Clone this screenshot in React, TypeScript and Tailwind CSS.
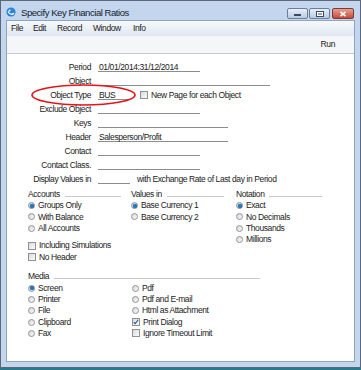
import React from "react";

const font = "font-['Liberation_Sans',Arial,sans-serif]";

interface FieldRow {
  label: string;
  value?: string;
  width: number;
}

const Radio: React.FC<{ checked?: boolean; label: string }> = ({ checked, label }) => (
  <div className="flex h-[11.3px] items-center gap-[3px]">
    <span className="flex h-[7px] w-[7px] shrink-0 items-center justify-center rounded-full border border-[#8e9297] bg-gradient-to-br from-[#d8d8d8] to-[#fafafa]">
      {checked && <span className="h-[4px] w-[4px] rounded-full bg-[#1f7bc4] shadow-[0_0_1px_#0d4a86]" />}
    </span>
    <span className="leading-none">{label}</span>
  </div>
);

const Check: React.FC<{ checked?: boolean; label: string }> = ({ checked, label }) => (
  <div className="flex h-[11.3px] items-center gap-[3px]">
    <span className="relative flex h-[8px] w-[8px] shrink-0 items-center justify-center border border-[#8e9297] bg-gradient-to-br from-[#dadada] to-[#fbfbfb]">
      {checked && (
        <svg viewBox="0 0 8 8" className="absolute left-0 top-0 h-[6px] w-[6px]">
          <path d="M1 4.2 L3 6.2 L7 1" fill="none" stroke="#21518f" strokeWidth="1.4" />
        </svg>
      )}
    </span>
    <span className="leading-none">{label}</span>
  </div>
);

const Group: React.FC<{ title: string; lineWidth: number; children: React.ReactNode }> = ({ title, lineWidth, children }) => (
  <div>
    <div className="flex h-[12px] items-center gap-[5px]">
      <span className="leading-none">{title}</span>
      <div className="mt-[4px] h-px bg-[#c9c9c9]" style={{ width: lineWidth }} />
    </div>
    {children}
  </div>
);

export default function App() {
  const rows: FieldRow[] = [
    { label: "Period", value: "01/01/2014:31/12/2014", width: 102 },
    { label: "Object", width: 172 },
    { label: "Object Type", value: "BUS", width: 32 },
    { label: "Exclude Object", width: 102 },
    { label: "Keys", width: 130 },
    { label: "Header", value: "Salesperson/Profit", width: 130 },
    { label: "Contact", width: 102 },
    { label: "Contact Class.", width: 102 },
    { label: "Display Values in", width: 32 },
  ];

  return (
    <div className={`h-[370px] w-[361px] bg-[#2b7a8b] text-[8.5px] tracking-[-0.4px] text-[#1b1b1b] ${font}`}>
      <div className="flex h-[368px] flex-col border border-[#5a6878] bg-[#c3d6ee]">
        {/* title bar */}
        <div className="flex h-[19px] items-start pl-[5px] pr-[6px] pt-[6px]">
          <svg viewBox="0 0 10 10" className="h-[10px] w-[10px]">
            <circle cx="5" cy="5" r="4.6" fill="#2d84d6" />
            <path d="M2.2 4.2 C2.4 7 6 8.2 8 6.2" fill="none" stroke="#ffffff" strokeWidth="1.3" />
            <circle cx="3.6" cy="3.4" r="1" fill="#e8f3ff" />
          </svg>
          <span className="ml-[5px] text-[9.5px] leading-[11px] tracking-[-0.45px] text-[#15202c]">Specify Key Financial Ratios</span>
          <div className="ml-auto flex gap-[1px] pt-[1px]">
            <div className="flex h-[11px] w-[21px] items-end justify-center rounded-[2px] border border-[#6d7f96] bg-gradient-to-b from-[#e7eef8] to-[#b9cbe2] pb-[2px]">
              <div className="h-[2px] w-[7px] border border-[#3b4a5c] bg-white" />
            </div>
            <div className="flex h-[11px] w-[21px] items-center justify-center rounded-[2px] border border-[#6d7f96] bg-gradient-to-b from-[#e7eef8] to-[#b9cbe2]">
              <div className="h-[6px] w-[8px] border border-[#3b4a5c] bg-white">
                <div className="mx-auto mt-[1px] h-[2px] w-[4px] bg-[#8fa4bd]" />
              </div>
            </div>
            <div className="ml-[1px] flex h-[11px] w-[22px] items-center justify-center rounded-[2px] border border-[#7d3838] bg-gradient-to-b from-[#e8a090] to-[#c44a3c]">
              <svg viewBox="0 0 8 6" className="h-[6px] w-[8px]">
                <path d="M1.5 0.8 L6.5 5.2 M6.5 0.8 L1.5 5.2" stroke="#ffffff" strokeWidth="1.6" />
              </svg>
            </div>
          </div>
        </div>

        {/* client area */}
        <div className="mx-[5px] mb-[5px] flex flex-1 flex-col border border-[#8ea4c0]">
          {/* menu */}
          <div className="flex h-[15px] items-center bg-gradient-to-b from-[#f6f9fc] to-[#dfe7f1] pl-[4px]">
            <span className="w-[22px]">File</span>
            <span className="w-[24px]">Edit</span>
            <span className="w-[36px]">Record</span>
            <span className="w-[40px]">Window</span>
            <span>Info</span>
          </div>
          {/* toolbar */}
          <div className="flex h-[18px] items-center justify-end border-b border-[#c4c9cf] bg-[#f5f6f8] pr-[19px]">
            <span>Run</span>
          </div>

          {/* form */}
          <div className="flex-1 bg-white pt-[6px]">
            {rows.map((r) => (
              <div key={r.label} className="relative flex h-[14px] items-center">
                <span className="w-[84px] text-right leading-none">{r.label}</span>
                <div
                  className="ml-[7px] h-[9px] border-b border-[#8d8d8d] pl-[1px] leading-[9px]"
                  style={{ width: r.width }}
                >
                  {r.value}
                </div>
                {r.label === "Object Type" && (
                  <>
                    <div className="ml-[10px]">
                      <Check label="New Page for each Object" />
                    </div>
                    <svg className="absolute left-[24px] top-[-4px] h-[22px] w-[105px]" viewBox="0 0 105 22">
                      <ellipse cx="52.5" cy="11" rx="51.5" ry="10" fill="none" stroke="#e3141c" strokeWidth="1.6" />
                    </svg>
                  </>
                )}
                {r.label === "Display Values in" && (
                  <span className="ml-[7px] leading-none">with Exchange Rate of Last day in Period</span>
                )}
              </div>
            ))}

            <div className="mt-[2px] flex pl-[21px]">
              <div className="w-[103px]">
                <Group title="Accounts" lineWidth={56}>
                  <Radio checked label="Groups Only" />
                  <Radio label="With Balance" />
                  <Radio label="All Accounts" />
                  <div className="mt-[6px]">
                    <Check label="Including Simulations" />
                    <Check label="No Header" />
                  </div>
                </Group>
              </div>
              <div className="w-[105px]">
                <Group title="Values in" lineWidth={57}>
                  <Radio checked label="Base Currency 1" />
                  <Radio label="Base Currency 2" />
                </Group>
              </div>
              <div>
                <Group title="Notation" lineWidth={53}>
                  <Radio checked label="Exact" />
                  <Radio label="No Decimals" />
                  <Radio label="Thousands" />
                  <Radio label="Millions" />
                </Group>
              </div>
            </div>

            <div className="mt-[8px] pl-[21px]">
              <Group title="Media" lineWidth={206}>
                <div className="flex">
                  <div className="w-[104px]">
                    <Radio checked label="Screen" />
                    <Radio label="Printer" />
                    <Radio label="File" />
                    <Radio label="Clipboard" />
                    <Radio label="Fax" />
                  </div>
                  <div>
                    <Radio label="Pdf" />
                    <Radio label="Pdf and E-mail" />
                    <Radio label="Html as Attachment" />
                    <Check checked label="Print Dialog" />
                    <Check label="Ignore Timeout Limit" />
                  </div>
                </div>
              </Group>
            </div>
          </div>
        </div>
      </div>
    </div>
  );
}
